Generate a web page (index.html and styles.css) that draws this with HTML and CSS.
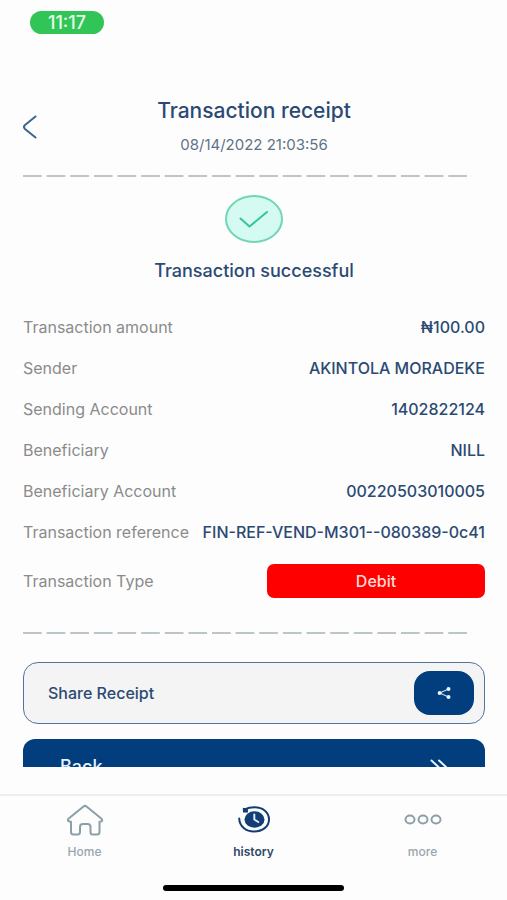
FILE: index.html
```html
<!DOCTYPE html>
<html lang="en">
<head>
<meta charset="utf-8">
<meta name="viewport" content="width=device-width, initial-scale=1">
<title>Transaction receipt</title>
<link rel="stylesheet" href="styles.css">
</head>
<body>
<div class="app">
  <div class="status"><time class="clock">11:17</time></div>
  <main class="screen">
    <header class="header">
      <button class="back-arrow" type="button" aria-label="Go back">
        <svg width="15" height="25" viewBox="0 0 15 25"><path d="M12.500 1.500 2 10Q0 12 2 14L12.500 22.500"/></svg>
      </button>
      <div class="heading">
        <h1>Transaction receipt</h1>
        <time class="date">08/14/2022 21:03:56</time>
      </div>
    </header>
    <div class="divider"></div>
    <section class="result">
      <svg class="check" width="58" height="48" viewBox="0 0 58 48"><ellipse cx="29" cy="24" rx="28" ry="23"/><path d="m15.500 23.500 9 8L42 17"/></svg>
      <h2>Transaction successful</h2>
    </section>
    <dl class="details">
      <div class="row"><dt>Transaction amount</dt><dd>₦100.00</dd></div>
      <div class="row"><dt>Sender</dt><dd>AKINTOLA MORADEKE</dd></div>
      <div class="row"><dt>Sending Account</dt><dd>1402822124</dd></div>
      <div class="row"><dt>Beneficiary</dt><dd>NILL</dd></div>
      <div class="row"><dt>Beneficiary Account</dt><dd>00220503010005</dd></div>
      <div class="row"><dt>Transaction reference</dt><dd>FIN-REF-VEND-M301--080389-0c41</dd></div>
      <div class="row row-type"><dt>Transaction Type</dt><dd class="tag">Debit</dd></div>
    </dl>
    <div class="divider"></div>
    <div class="actions">
      <button class="share" type="button">
        <span>Share Receipt</span>
        <span class="share-icon">
          <svg width="14" height="12" viewBox="0 0 14 12"><path d="M11.500 2 2.800 6l8.700 4"/><circle cx="2.600" cy="6" r="2"/><circle cx="11.500" cy="2" r="2"/><circle cx="11.500" cy="10" r="2"/></svg>
        </span>
      </button>
      <button class="back" type="button">
        <span>Back</span>
        <svg width="18" height="16" viewBox="0 0 18 16"><path d="m1.500 1.500 7 6.500-7 6.500M9 1.500 16 8l-7 6.500"/></svg>
      </button>
    </div>
  </main>
  <nav class="tabs">
    <a class="tab" href="#home">
      <svg width="38" height="32" viewBox="0 0 38 32"><path d="M17.500 2.500Q19 1.300 20.500 2.500L35.300 14.500Q37 16.300 35.500 17.300 34.800 17.800 33.500 17.800V28Q33.500 30.500 31 30.500H26.500Q24.500 30.500 24.500 28V23Q24.500 20 21.500 20H17Q14 20 14 23V28Q14 30.500 11.500 30.500H7.500Q5 30.500 5 28V17.800Q3 17.800 2.300 17 1.200 15.800 2.700 14.500Z"/></svg>
      <span>Home</span>
    </a>
    <a class="tab active" href="#history" aria-current="page">
      <svg width="34" height="32" viewBox="0 0 34 32"><path d="M2.200 14.500C2.500 22.500 9 27.500 17 27.500c8.500 0 15-5 15-12S26 3.300 17.500 3.300Q12 3.300 7.500 5.500"/><ellipse class="fill" cx="17.500" cy="15.500" rx="10" ry="8.300"/><path class="fill" d="M5.800 3.800 10.800 4.800 11 8.500H6Z"/><path class="hands" d="M17.300 10.500v5l4 2.500"/></svg>
      <span>history</span>
    </a>
    <a class="tab" href="#more">
      <svg width="38" height="32" viewBox="0 0 38 32"><ellipse cx="6" cy="15.500" rx="4.500" ry="4"/><ellipse cx="19" cy="15.500" rx="4.500" ry="4"/><ellipse cx="32" cy="15.500" rx="4.500" ry="4"/></svg>
      <span>more</span>
    </a>
  </nav>
  <div class="home-bar"></div>
</div>
</body>
</html>
```
FILE: styles.css
```css
* { box-sizing: border-box; }

body {
  margin: 0;
  background: #fdfdfd;
  color: #2b4a73;
  font-family: Inter, "Liberation Sans", sans-serif;
  font-size: 16px;
  line-height: 20px;
}

button {
  border: 0;
  padding: 0;
  background: none;
  color: inherit;
  font: inherit;
  cursor: pointer;
}

h1, h2, dl, dd { margin: 0; }

svg {
  display: block;
  fill: none;
  stroke: currentColor;
  stroke-width: 2;
  stroke-linecap: round;
  stroke-linejoin: round;
}

.app {
  display: flex;
  flex-direction: column;
  height: 100vh;
}

.status { padding: 11px 30px 0; }

.clock {
  display: block;
  width: 74px;
  border-radius: 12px;
  background: #31c558;
  color: #e6fbe9;
  font-size: 18px;
  font-weight: 500;
  line-height: 23px;
  text-align: center;
}

.screen {
  flex: 1;
  min-height: 0;
  overflow: hidden;
  padding: 64px 22px 0 23px;
}

.header {
  display: grid;
  grid-template-columns: 15px 1fr 15px;
  align-items: center;
  height: 58px;
}

.back-arrow { color: #3f6390; }

.heading { text-align: center; }

h1 {
  font-size: 21px;
  font-weight: 500;
  line-height: 24px;
}

.date {
  display: block;
  margin-top: 12px;
  color: #5e7389;
  font-size: 15px;
}

.divider {
  height: 2px;
  margin: 19px 13px 0 0;
  background: linear-gradient(90deg, #bcc6ca 79%, transparent 79%) 0 0 / calc(100% / 19) 2px;
}

.result {
  display: flex;
  flex-direction: column;
  align-items: center;
  gap: 16px;
  padding-top: 18px;
}

.check { stroke: #35c59c; }
.check ellipse { fill: #d5faf1; stroke: #70d6b6; }

h2 {
  font-size: 18px;
  font-weight: 500;
  line-height: 24px;
}

.details { padding-top: 23px; }

.row {
  display: flex;
  align-items: center;
  justify-content: space-between;
  height: 41px;
  white-space: nowrap;
}

dt { color: #8b8b8b; }
dd { font-weight: 500; }

.row-type {
  height: 34px;
  margin: 12px 0 34px;
}

.tag {
  width: 218px;
  border-radius: 7px;
  background: #fe0000;
  color: #ffdcd8;
  line-height: 34px;
  text-align: center;
}

.details + .divider { margin-top: 0; }

.actions {
  display: flex;
  flex-direction: column;
  gap: 15px;
  padding-top: 28px;
}

.share, .back {
  display: flex;
  align-items: center;
  justify-content: space-between;
  font-weight: 500;
}

.share {
  height: 62px;
  padding: 0 10px 0 24px;
  border: 1px solid #50749a;
  border-radius: 15px;
  background: #f4f4f4;
}

.share-icon {
  display: grid;
  place-items: center;
  width: 60px;
  height: 44px;
  border-radius: 16px;
  background: #023e7e;
  color: #eaf5ff;
}

.share-icon svg { stroke-width: 1; }
.share-icon circle { fill: currentColor; stroke: none; }

.back {
  height: 56px;
  padding: 0 37px;
  border-radius: 12px;
  background: #023e7e;
  color: #e8f3ff;
  font-size: 18px;
}

.tabs {
  display: grid;
  grid-template-columns: repeat(3, 1fr);
  margin-top: 27px;
  padding-top: 8px;
  border-top: 2px solid #eeeeee;
}

.tab {
  display: flex;
  flex-direction: column;
  align-items: center;
  gap: 6px;
  color: #99a5b0;
  font-size: 12px;
  font-weight: 500;
  text-decoration: none;
}

.tab svg { color: #8c9fa9; }
.tab.active { color: #2f4866; font-weight: 600; }
.tab.active svg { color: #123e75; }
.tab .fill { fill: currentColor; stroke: none; }
.tab .hands { stroke: #dcebfa; }

.home-bar {
  width: 181px;
  height: 6px;
  margin: 23px auto 9px;
  border-radius: 3px;
  background: #000;
}
```
